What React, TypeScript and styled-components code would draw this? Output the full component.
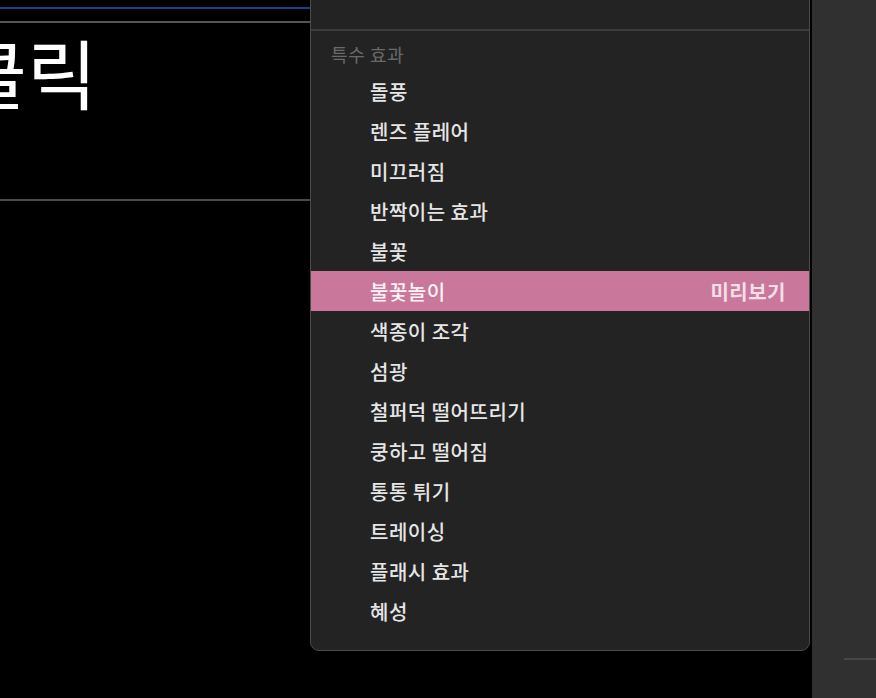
import React from "react";
import styled, { createGlobalStyle } from "styled-components";

const GlobalStyle = createGlobalStyle`
  html, body {
    margin: 0;
    padding: 0;
    background: #000;
    overflow: hidden;
  }
  body {
    font-family: "Noto Sans CJK KR", "Noto Sans", sans-serif;
  }
`;

const Page = styled.div`
  display: flex;
  width: 876px;
  height: 698px;
  background: #000;
  overflow: hidden;
`;

const Canvas = styled.div`
  position: relative;
  flex: 1;
  overflow: hidden;
  background: #000;
`;

const Slide = styled.div`
  display: flex;
  flex-direction: column;
  padding-top: 7px;
`;

const Rule = styled.div<{ $color: string; $height: number; $gap: number }>`
  height: ${(p) => p.$height}px;
  margin-top: ${(p) => p.$gap}px;
  background: ${(p) => p.$color};
  width: 320px;
`;

const TextBox = styled.div`
  height: 176px;
  display: flex;
  align-items: flex-start;
`;

const BigText = styled.div`
  margin-left: -43px;
  margin-top: 2px;
  color: #fff;
  font-size: 76px;
  line-height: 92px;
  white-space: nowrap;
`;

const Menu = styled.div`
  position: absolute;
  left: 310px;
  top: -12px;
  width: 500px;
  background: #232323;
  border: 1px solid #4a4a4a;
  border-radius: 0 0 9px 9px;
  box-sizing: border-box;
  padding-bottom: 19px;
`;

const MenuTop = styled.div`
  height: 40px;
  border-bottom: 2px solid #3c3c3c;
`;

const SectionTitle = styled.div`
  padding: 9px 0 0 20px;
  height: 40px;
  color: #6a6a6a;
  font-size: 18px;
  letter-spacing: 0.6px;
  line-height: 28px;
  box-sizing: border-box;
`;

const Item = styled.div<{ $active?: boolean }>`
  display: flex;
  align-items: center;
  justify-content: space-between;
  height: 40px;
  padding: 0 23px 0 59px;
  background: ${(p) => (p.$active ? "#c9789b" : "transparent")};
  color: ${(p) => (p.$active ? "#fbf3f6" : "#e6e6e6")};
  font-size: 20px;
  letter-spacing: 0.5px;
  font-weight: 500;
`;

const Hint = styled.span`
  color: #f4dfe8;
  font-weight: 700;
  font-size: 20px;
  letter-spacing: 0.5px;
`;

const SidePanel = styled.div`
  width: 64px;
  background: #303030;
  display: flex;
  flex-direction: column;
  align-items: flex-end;
  padding-top: 658px;
  box-sizing: border-box;
`;

const SideRule = styled.div`
  width: 32px;
  height: 2px;
  background: #474747;
`;

const effects = [
  "돌풍",
  "렌즈 플레어",
  "미끄러짐",
  "반짝이는 효과",
  "불꽃",
  "불꽃놀이",
  "색종이 조각",
  "섬광",
  "철퍼덕 떨어뜨리기",
  "쿵하고 떨어짐",
  "통통 튀기",
  "트레이싱",
  "플래시 효과",
  "혜성",
];

const App = () => {
  return (
    <Page>
      <GlobalStyle />
      <Canvas>
        <Slide>
          <Rule $color="#1f3f8c" $height={2} $gap={0} />
          <Rule $color="#555555" $height={2} $gap={12} />
          <TextBox>
            <BigText>클릭</BigText>
          </TextBox>
          <Rule $color="#4a4a4a" $height={2} $gap={0} />
        </Slide>
        <Menu>
          <MenuTop />
          <SectionTitle>특수 효과</SectionTitle>
          {effects.map((name) => (
            <Item key={name} $active={name === "불꽃놀이"}>
              <span>{name}</span>
              {name === "불꽃놀이" && <Hint>미리보기</Hint>}
            </Item>
          ))}
        </Menu>
      </Canvas>
      <SidePanel>
        <SideRule />
      </SidePanel>
    </Page>
  );
};

export default App;
